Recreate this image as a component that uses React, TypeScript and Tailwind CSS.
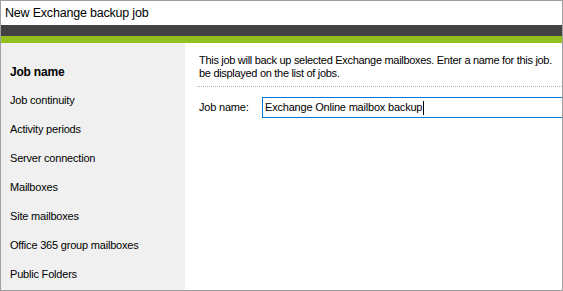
import React from "react";

const steps = [
  "Job name",
  "Job continuity",
  "Activity periods",
  "Server connection",
  "Mailboxes",
  "Site mailboxes",
  "Office 365 group mailboxes",
  "Public Folders",
];

export default function App() {
  return (
    <div
      className="w-[563px] h-[291px] border border-[#a0a0a0] bg-white flex flex-col overflow-hidden text-black"
      style={{ fontFamily: '"Liberation Sans", Arial, sans-serif' }}
    >
      {/* title */}
      <div className="h-[24px] flex items-center pl-[4px] text-[12.5px] tracking-[-0.2px] shrink-0">New Exchange backup job</div>
      <div className="h-[11px] bg-[#424242] shrink-0" />
      <div className="h-[7px] bg-[#93c01f] shrink-0" />

      <div className="flex flex-1 min-h-0">
        {/* wizard steps */}
        <div className="w-[184px] bg-[#f0f0f0] shrink-0 pt-[14px]">
          {steps.map((s, i) => (
            <div
              key={s}
              className={`h-[29px] flex items-center pl-[9px] tracking-[-0.2px] ${i === 0 ? "font-bold text-[12px]" : "text-[11px]"}`}
            >
              {s}
            </div>
          ))}
        </div>

        {/* page */}
        <div className="flex-1 min-w-0 overflow-hidden pl-[14px] pt-[11px]">
          <div className="text-[11px] leading-[13px] whitespace-nowrap tracking-[-0.3px]">
            <div>This job will back up selected Exchange mailboxes. Enter a name for this job.</div>
            <div>be displayed on the list of jobs.</div>
          </div>
          <div className="mt-[6px] border-t border-dotted border-[#b4b4b4] -ml-[2px]" />
          <div className="flex items-center mt-[10px]">
            <span className="text-[11px] w-[63px] shrink-0 tracking-[-0.2px]">Job name:</span>
            <div className="h-[21px] w-[320px] shrink-0 border border-[#0078d7] flex items-center pl-[2px] text-[11px] tracking-[-0.2px] whitespace-nowrap">
              Exchange Online mailbox backup
              <span className="inline-block w-px h-[14px] bg-black ml-px" />
            </div>
          </div>
        </div>
      </div>
    </div>
  );
}
